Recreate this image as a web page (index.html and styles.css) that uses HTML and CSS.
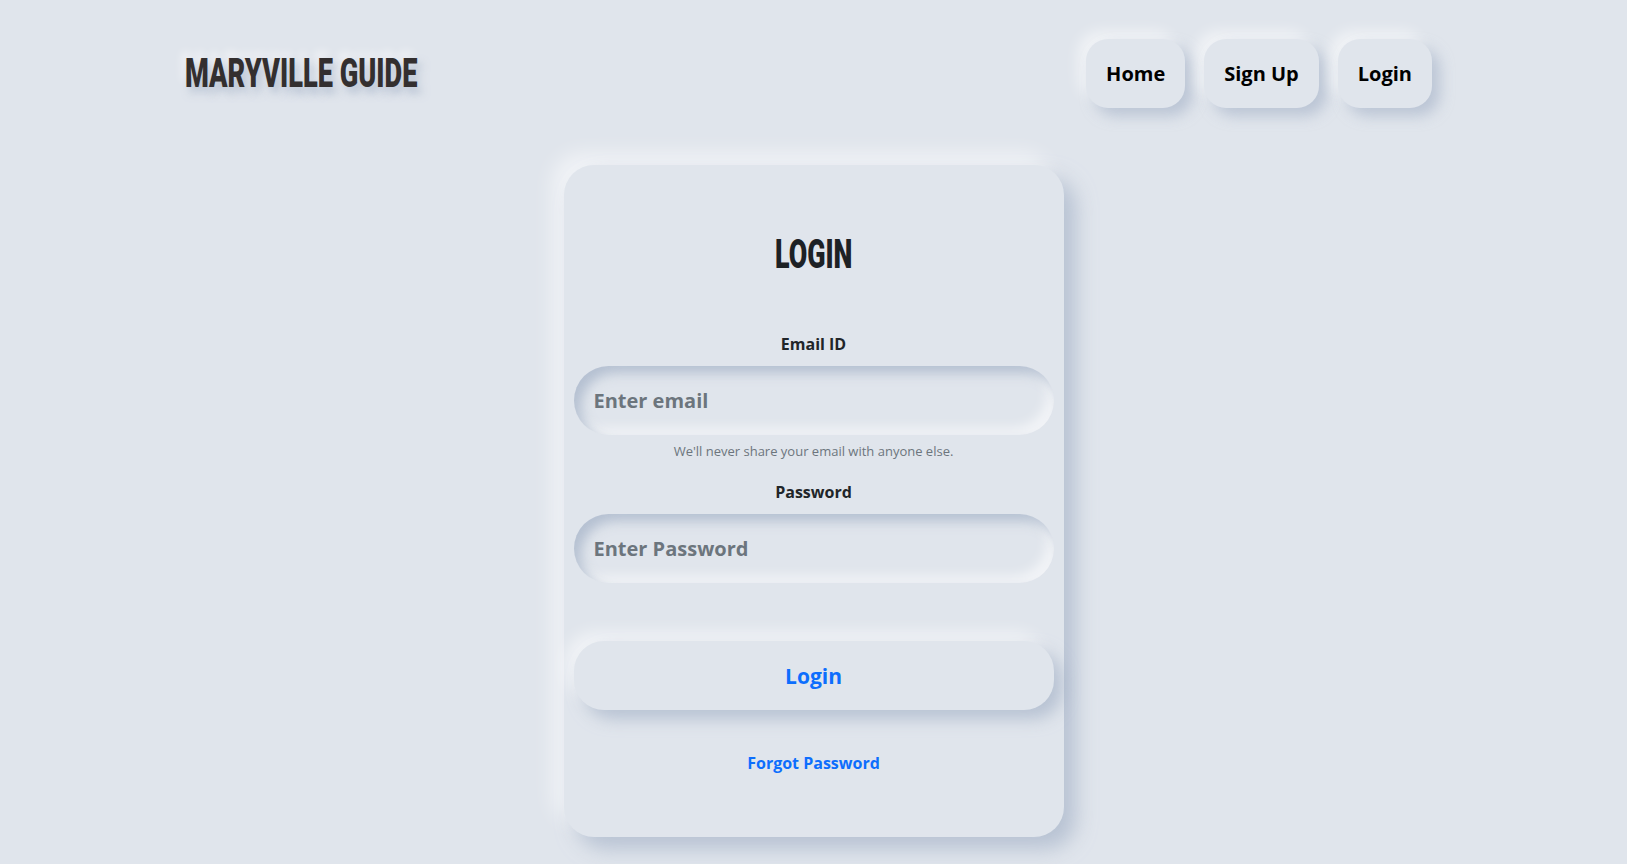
FILE: index.html
```html
<!DOCTYPE html>
<html lang="en">
<head>
<meta charset="utf-8">
<title>Maryville Guide - Login</title>
<link rel="stylesheet" href="styles.css">
</head>
<body>
<header class="topbar">
  <div class="brand">MARYVILLE GUIDE</div>
  <nav class="nav">
    <a class="nav-btn" href="#">Home</a>
    <a class="nav-btn" href="#">Sign Up</a>
    <a class="nav-btn" href="#">Login</a>
  </nav>
</header>
<main class="main">
  <form class="card">
    <h1 class="title">LOGIN</h1>
    <label class="label" for="email">Email ID</label>
    <input class="field" id="email" type="email" placeholder="Enter email">
    <small class="help">We'll never share your email with anyone else.</small>
    <label class="label label-pw" for="pw">Password</label>
    <input class="field" id="pw" type="password" placeholder="Enter Password">
    <button class="submit" type="button">Login</button>
    <a class="forgot" href="#">Forgot Password</a>
  </form>
</main>
</body>
</html>
```
FILE: styles.css
```css
* { box-sizing: border-box; }
html, body { margin: 0; padding: 0; }
body {
  background: #e0e5ec;
  font-family: "Open Sans", "Noto Sans", sans-serif;
  color: #212529;
  min-height: 864px;
}
.topbar {
  display: flex;
  justify-content: space-between;
  align-items: center;
  padding: 39px 195px 0 185px;
  height: 108px;
}
.brand {
  font-family: Impact, Roboto, sans-serif;
  font-weight: 900;
  font-size: 40px;
  line-height: 1;
  color: #332f2f;
  display: inline-block;
  transform: scaleX(0.68);
  transform-origin: left center;
  text-shadow: 6px 6px 10px rgba(163, 177, 198, 0.7), -6px -6px 10px rgba(255, 255, 255, 0.6);
  white-space: nowrap;
}
.nav {
  display: flex;
  gap: 19px;
  align-self: stretch;
}
.nav-btn {
  display: flex;
  align-items: center;
  justify-content: center;
  height: 69px;
  padding: 0 20px;
  border-radius: 22px;
  background: #e0e5ec;
  color: #000;
  text-decoration: none;
  font-weight: 700;
  font-size: 20px;
  box-shadow: 8px 8px 14px rgba(163, 177, 198, 0.6), -8px -8px 14px rgba(255, 255, 255, 0.55);
}
.main {
  display: flex;
  justify-content: center;
  padding-top: 57px;
}
.card {
  width: 500px;
  height: 672px;
  background: #e0e5ec;
  border-radius: 30px;
  padding: 0 10px;
  display: flex;
  flex-direction: column;
  align-items: center;
  box-shadow: 12px 12px 20px rgba(163, 177, 198, 0.65), -12px -12px 20px rgba(255, 255, 255, 0.55);
}
.title {
  font-family: Impact, Roboto, sans-serif;
  font-weight: 900;
  font-size: 40px;
  line-height: 1;
  color: #1d2125;
  margin: 70px 0 0;
  transform: scaleX(0.67);
}
.label {
  font-weight: 700;
  font-size: 16px;
  color: #212529;
  margin-top: 58px;
  line-height: 22px;
}
.label-pw { margin-top: 21px; }
.field {
  width: 480px;
  height: 69px;
  margin-top: 11px;
  border: none;
  outline: none;
  border-radius: 35px;
  background: #e0e5ec;
  padding: 0 20px;
  font-family: inherit;
  font-size: 20px;
  font-weight: 700;
  color: #495057;
  box-shadow: inset 7px 7px 12px rgba(163, 177, 198, 0.7), inset -7px -7px 12px rgba(255, 255, 255, 0.6);
}
.field::placeholder { color: #6c757d; opacity: 1; }
.help {
  font-size: 13px;
  color: #6c757d;
  margin-top: 7px;
  line-height: 18px;
}
.submit {
  width: 480px;
  height: 69px;
  margin-top: 58px;
  border: none;
  border-radius: 30px;
  background: #e0e5ec;
  color: #0d6efd;
  font-family: inherit;
  font-weight: 700;
  font-size: 21px;
  box-shadow: 9px 9px 16px rgba(163, 177, 198, 0.65), -9px -9px 16px rgba(255, 255, 255, 0.55);
}
.forgot {
  margin-top: 42px;
  color: #0d6efd;
  font-weight: 700;
  font-size: 16px;
  text-decoration: none;
}
```
